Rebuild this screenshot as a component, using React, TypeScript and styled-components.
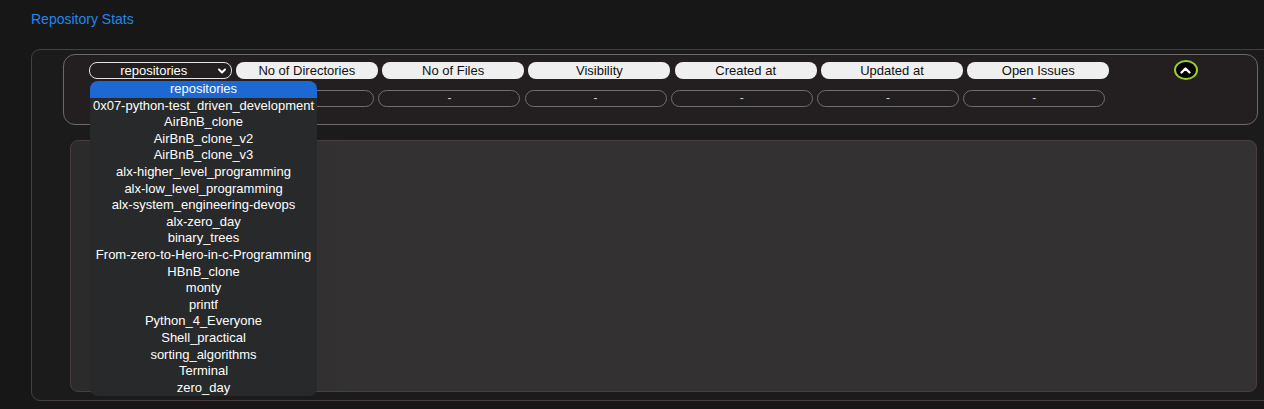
import React from "react";
import styled, { createGlobalStyle } from "styled-components";

const GlobalStyle = createGlobalStyle`
  html, body {
    margin: 0;
    padding: 0;
    background: #171717;
    overflow: hidden;
  }
  body {
    font-family: "Liberation Sans", Arial, sans-serif;
  }
`;

const Page = styled.div`
  width: 1264px;
  height: 409px;
  background: #171717;
  overflow: hidden;
`;

const Title = styled.h2`
  margin: 0;
  padding: 11px 0 0 31px;
  font-family: "Comic Sans MS", "Liberation Sans", sans-serif;
  font-size: 14px;
  font-weight: normal;
  line-height: 16px;
  color: #1e88f0;
`;

const Outer = styled.section`
  margin: 22px -20px 0 31px;
  padding: 4px 25px 8px 31px;
  border: 1px solid #4a3d3d;
  border-radius: 9px;
  background: #1b1b1b;
`;

const StatsCard = styled.div`
  border: 1px solid #6d6969;
  border-radius: 12px;
  background: #231f21;
  padding: 7px 0 17px 25px;
`;

const HeaderRow = styled.div`
  display: flex;
  align-items: flex-start;
  gap: 4.3px;
  height: 17px;
`;

const SelectWrap = styled.div`
  position: relative;
  width: 142.5px;
  height: 17px;
  flex: none;
`;

const SelectBox = styled.div`
  box-sizing: border-box;
  display: flex;
  align-items: center;
  width: 100%;
  height: 17px;
  padding: 0 5px 0 4px;
  border: 1px solid #e4e4e4;
  border-radius: 8px;
  color: #ffffff;
  font-size: 13px;
`;

const SelectLabel = styled.span`
  flex: 1;
  text-align: center;
  margin-right: 4px;
`;

const Dropdown = styled.ul`
  position: absolute;
  top: 19px;
  left: 1px;
  width: 227px;
  margin: 0;
  padding: 0;
  list-style: none;
  border-radius: 8px;
  overflow: hidden;
  background: #28292a;
  z-index: 10;
`;

const Option = styled.li<{ $active?: boolean }>`
  height: 16.6px;
  line-height: 16.6px;
  text-align: center;
  font-size: 13px;
  color: #ffffff;
  white-space: nowrap;
  background: ${(p) => (p.$active ? "#1d68d3" : "transparent")};
`;

const HeaderButton = styled.button`
  box-sizing: border-box;
  flex: none;
  width: 142px;
  height: 17px;
  padding: 0;
  border: none;
  border-radius: 8px;
  background: #efefef;
  color: #111111;
  font-family: "Liberation Sans", Arial, sans-serif;
  font-size: 13px;
  line-height: 17px;
`;

const ToggleButton = styled.button`
  box-sizing: border-box;
  flex: none;
  display: flex;
  align-items: center;
  justify-content: center;
  width: 24px;
  height: 20px;
  margin: -2px 0 0 60px;
  padding: 0;
  border: 2px solid #9acd32;
  border-radius: 50%;
  background: #000000;
`;

const ValueRow = styled.div`
  display: flex;
  gap: 4.2px;
  margin: 11px 0 0 -3px;
`;

const ValueCell = styled.div<{ $blank?: boolean }>`
  box-sizing: border-box;
  flex: none;
  width: 142px;
  height: 17px;
  border: 1px solid ${(p) => (p.$blank ? "transparent" : "#6f6f6f")};
  border-radius: 9px;
  color: #d0d0d0;
  font-size: 12px;
  line-height: 15px;
  text-align: center;
`;

const ChartPanel = styled.div`
  height: 250px;
  margin: 15px 1px 0 7px;
  border: 1px solid #4b3c40;
  border-radius: 8px;
  background: linear-gradient(90deg, #2b2b2b 0px, #333132 280px);
`;

const repos = [
  "repositories",
  "0x07-python-test_driven_development",
  "AirBnB_clone",
  "AirBnB_clone_v2",
  "AirBnB_clone_v3",
  "alx-higher_level_programming",
  "alx-low_level_programming",
  "alx-system_engineering-devops",
  "alx-zero_day",
  "binary_trees",
  "From-zero-to-Hero-in-c-Programming",
  "HBnB_clone",
  "monty",
  "printf",
  "Python_4_Everyone",
  "Shell_practical",
  "sorting_algorithms",
  "Terminal",
  "zero_day",
];

const headers = [
  "No of Directories",
  "No of Files",
  "Visibility",
  "Created at",
  "Updated at",
  "Open Issues",
];

export default function App() {
  return (
    <Page>
      <GlobalStyle />
      <Title>Repository Stats</Title>
      <Outer>
        <StatsCard>
          <HeaderRow>
            <SelectWrap>
              <SelectBox>
                <SelectLabel>repositories</SelectLabel>
                <svg width="8" height="6" viewBox="0 0 8 6">
                  <polyline
                    points="1,1.5 4,4.5 7,1.5"
                    fill="none"
                    stroke="#ffffff"
                    strokeWidth="2"
                    strokeLinecap="round"
                    strokeLinejoin="round"
                  />
                </svg>
              </SelectBox>
              <Dropdown>
                {repos.map((r, i) => (
                  <Option key={r} $active={i === 0}>
                    {r}
                  </Option>
                ))}
              </Dropdown>
            </SelectWrap>
            {headers.map((h) => (
              <HeaderButton key={h}>{h}</HeaderButton>
            ))}
            <ToggleButton aria-label="collapse">
              <svg width="11" height="7" viewBox="0 0 11 7">
                <polyline
                  points="1.5,5.5 5.5,1.5 9.5,5.5"
                  fill="none"
                  stroke="#ffffff"
                  strokeWidth="2.4"
                  strokeLinecap="round"
                  strokeLinejoin="round"
                />
              </svg>
            </ToggleButton>
          </HeaderRow>
          <ValueRow>
            <ValueCell $blank />
            {headers.map((h, i) => (
              <ValueCell key={h}>{i === 0 ? "" : "-"}</ValueCell>
            ))}
          </ValueRow>
        </StatsCard>
        <ChartPanel />
      </Outer>
    </Page>
  );
}
